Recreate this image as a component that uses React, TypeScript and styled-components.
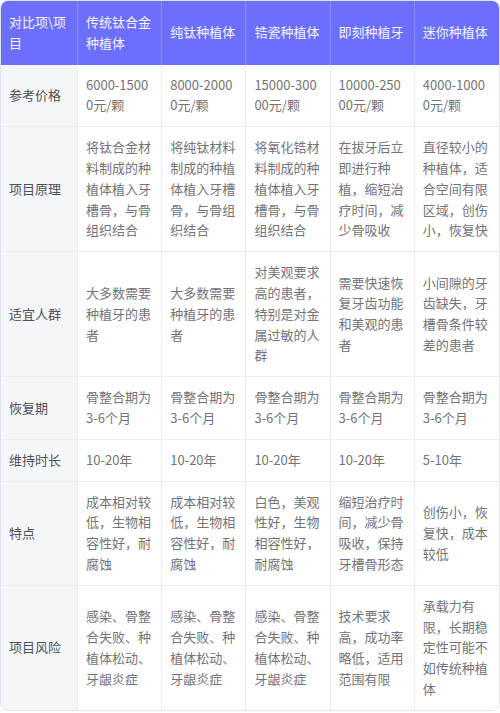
import React from 'react'
import styled, { createGlobalStyle } from 'styled-components'

const GlobalStyle = createGlobalStyle`
  body {
    margin: 0;
    background: #ffffff;
    font-family: "Noto Sans CJK SC", "Noto Sans", sans-serif;
  }
`

const Wrapper = styled.div`
  width: 500px;
  box-sizing: border-box;
  border: 1px solid #e3e4ea;
  border-radius: 8px;
  overflow: hidden;
`

const Table = styled.table`
  width: 100%;
  table-layout: fixed;
  border-collapse: separate;
  border-spacing: 0;
  font-size: 13px;
  line-height: 1.6;
`

const HeadCell = styled.th`
  background: #6c6ffb;
  color: #f4f4ff;
  font-weight: 400;
  text-align: left;
  vertical-align: middle;
  padding: 11px 8px;
  border-right: 1px solid #8e91fc;
  word-break: break-all;
  &:last-child {
    border-right: none;
  }
`

const Cell = styled.td<{ label?: boolean }>`
  background: ${({ label }) => (label ? '#f5f6fa' : '#ffffff')};
  color: ${({ label }) => (label ? '#505055' : '#737378')};
  vertical-align: middle;
  padding: 10px 8px;
  border-right: 1px solid #ebecf0;
  border-bottom: 1px solid #ebecf0;
  word-break: break-all;
  &:last-child {
    border-right: none;
  }
  tr:last-child > & {
    border-bottom: none;
  }
`

const headers = ['对比项\\项目', '传统钛合金种植体', '纯钛种植体', '锆瓷种植体', '即刻种植牙', '迷你种植体']

const rows: string[][] = [
  ['参考价格', '6000-15000元/颗', '8000-20000元/颗', '15000-30000元/颗', '10000-25000元/颗', '4000-10000元/颗'],
  [
    '项目原理',
    '将钛合金材料制成的种植体植入牙槽骨，与骨组织结合',
    '将纯钛材料制成的种植体植入牙槽骨，与骨组织结合',
    '将氧化锆材料制成的种植体植入牙槽骨，与骨组织结合',
    '在拔牙后立即进行种植，缩短治疗时间，减少骨吸收',
    '直径较小的种植体，适合空间有限区域，创伤小，恢复快',
  ],
  [
    '适宜人群',
    '大多数需要种植牙的患者',
    '大多数需要种植牙的患者',
    '对美观要求高的患者，特别是对金属过敏的人群',
    '需要快速恢复牙齿功能和美观的患者',
    '小间隙的牙齿缺失，牙槽骨条件较差的患者',
  ],
  ['恢复期', '骨整合期为3-6个月', '骨整合期为3-6个月', '骨整合期为3-6个月', '骨整合期为3-6个月', '骨整合期为3-6个月'],
  ['维持时长', '10-20年', '10-20年', '10-20年', '10-20年', '5-10年'],
  [
    '特点',
    '成本相对较低，生物相容性好，耐腐蚀',
    '成本相对较低，生物相容性好，耐腐蚀',
    '白色，美观性好，生物相容性好，耐腐蚀',
    '缩短治疗时间，减少骨吸收，保持牙槽骨形态',
    '创伤小，恢复快，成本较低',
  ],
  [
    '项目风险',
    '感染、骨整合失败、种植体松动、牙龈炎症',
    '感染、骨整合失败、种植体松动、牙龈炎症',
    '感染、骨整合失败、种植体松动、牙龈炎症',
    '技术要求高，成功率略低，适用范围有限',
    '承载力有限，长期稳定性可能不如传统种植体',
  ],
]

const App: React.FC = () => {
  return (
    <>
      <GlobalStyle />
      <Wrapper>
        <Table>
          <colgroup>
            <col style={{ width: 77 }} />
            <col />
            <col />
            <col />
            <col />
            <col />
          </colgroup>
          <thead>
            <tr>
              {headers.map((h) => (
                <HeadCell key={h}>{h}</HeadCell>
              ))}
            </tr>
          </thead>
          <tbody>
            {rows.map((row) => (
              <tr key={row[0]}>
                {row.map((c, i) => (
                  <Cell key={i} label={i === 0}>
                    {c}
                  </Cell>
                ))}
              </tr>
            ))}
          </tbody>
        </Table>
      </Wrapper>
    </>
  )
}

export default App
